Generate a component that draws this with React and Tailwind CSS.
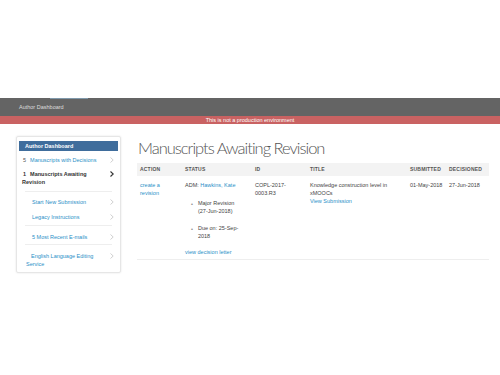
import React from 'react';

const Chevron = ({ dark }) => (
  <svg width="4" height="6" viewBox="0 0 4 6" className="shrink-0">
    <path d="M0.5 0.5 L3.2 3 L0.5 5.5" fill="none" stroke={dark ? '#333' : '#bbb'} strokeWidth={dark ? 1.1 : 0.7} />
  </svg>
);

const Bullet = ({ children }) => (
  <div className="flex gap-[5px] pl-[6px]">
    <span className="text-[#888] leading-[10px]">•</span>
    <div>{children}</div>
  </div>
);

const App = () => {
  return (
    <div className="w-[500px] h-[375px] bg-white font-['Liberation_Sans',Arial,sans-serif] text-[5.5px] text-[#444]">
      <div className="h-[98px]" />
      <div className="h-[1px] bg-[#646464] pl-[50px]"><div className="w-[38px] h-[1px] bg-[#7f98aa]" /></div>
      <div className="h-[17px] bg-[#646464] flex items-center pl-[19px] text-[#ddd] text-[5.5px]">Author Dashboard</div>
      <div className="h-[8px] bg-[#c96262] flex items-center justify-center text-white text-[5.5px]">This is not a production environment</div>

      <div className="flex pt-[12px] pl-[16px]">
        <aside className="w-[105px] h-[137px] border border-[#e6e6e6] rounded-[2px] shadow-[0_0_2px_rgba(0,0,0,0.12)] p-[2px] pt-[4px]">
          <div className="bg-[#3f6d9c] text-white font-bold h-[10px] flex items-center pl-[6px]">Author Dashboard</div>
          <div className="flex items-center justify-between pl-[4px] pr-[4px] mt-[5px] h-[8px] text-[#2a8fc7]">
            <span><span className="text-[#555] mr-[4px]">5</span>Manuscripts with Decisions</span>
            <Chevron />
          </div>
          <div className="flex justify-between pl-[4px] pr-[4px] mt-[6px] text-[#333] font-bold leading-[8px]">
            <div className="flex"><span className="mr-[4px]">1</span><span>Manuscripts Awaiting<br /><span className="-ml-[8px]">Revision</span></span></div>
            <div className="pt-[1px]"><Chevron dark /></div>
          </div>
          <div className="mx-[6px] mt-[5px] border-t border-[#eee]" />
          <div className="flex items-center justify-between pl-[13px] pr-[4px] mt-[6px] h-[8px] text-[#2a8fc7]">
            <span>Start New Submission</span><Chevron />
          </div>
          <div className="flex items-center justify-between pl-[13px] pr-[4px] mt-[7px] h-[8px] text-[#2a8fc7]">
            <span>Legacy Instructions</span><Chevron />
          </div>
          <div className="mx-[6px] mt-[4px] border-t border-[#eee]" />
          <div className="flex items-center justify-between pl-[13px] pr-[4px] mt-[7px] h-[8px] text-[#2a8fc7]">
            <span>5 Most Recent E-mails</span><Chevron />
          </div>
          <div className="mx-[6px] mt-[3px] border-t border-[#eee]" />
          <div className="flex justify-between pl-[12px] pr-[4px] mt-[7px] text-[#2a8fc7] leading-[8px]">
            <span>English Language Editing<br /><span className="-ml-[5px]">Service</span></span>
            <div className="pt-[1px]"><Chevron /></div>
          </div>
        </aside>

        <main className="ml-[16px] w-[352px]">
          <h1 className="font-['Lato',sans-serif] font-light text-[16.5px] tracking-[-1px] leading-[20px] text-[#555] mt-[2px] pl-[1px]">Manuscripts Awaiting Revision</h1>
          <div className="mt-[5px] grid grid-cols-[45px_70px_55px_100px_39px_43px] bg-[#f3f3f3] h-[13px] items-center font-bold text-[#555] text-[5px] tracking-[0.2px] pl-[3px]">
            <span>ACTION</span>
            <span>STATUS</span>
            <span>ID</span>
            <span>TITLE</span>
            <span>SUBMITTED</span>
            <span>DECISIONED</span>
          </div>
          <div className="grid grid-cols-[45px_70px_55px_100px_39px_43px] pl-[3px] pt-[5px] pb-[3px] leading-[8px] border-b border-[#eee]">
            <div className="text-[#2a8fc7]">create a<br />revision</div>
            <div>
              <div>ADM: <span className="text-[#2a8fc7]">Hawkins, Kate</span></div>
              <div className="mt-[10px]"><Bullet>Major Revision<br />(27-Jun-2018)</Bullet></div>
              <div className="mt-[9px]"><Bullet>Due on: 25-Sep-<br />2018</Bullet></div>
              <div className="mt-[8px] text-[#2a8fc7]">view decision letter</div>
            </div>
            <div>COPL-2017-<br />0003.R3</div>
            <div>
              <div>Knowledge construction level in<br />xMOOCs</div>
              <div className="text-[#2a8fc7]">View Submission</div>
            </div>
            <div>01-May-2018</div>
            <div>27-Jun-2018</div>
          </div>
        </main>
      </div>
    </div>
  );
};

export default App;
